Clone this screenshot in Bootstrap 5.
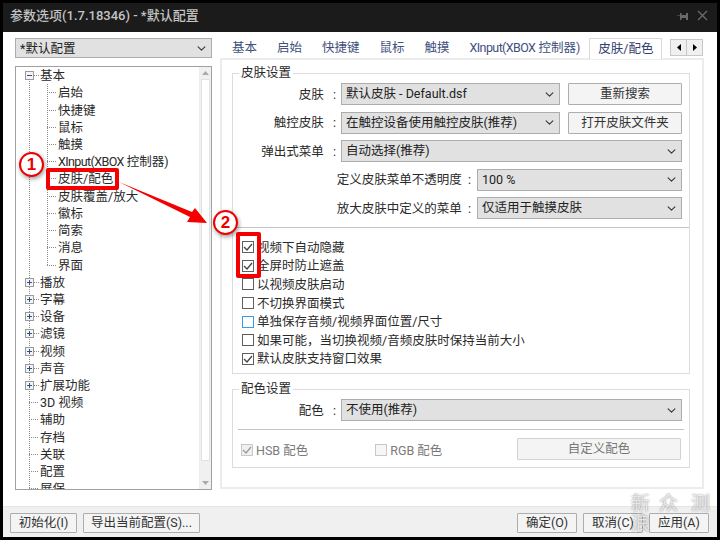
<!DOCTYPE html>
<html lang="zh-CN">
<head>
  <meta charset="UTF-8">
  <meta name="viewport" content="width=device-width, initial-scale=1.0">
  <title>参数选项</title>
  <link href="https://cdn.jsdelivr.net/npm/bootstrap@5.3.2/dist/css/bootstrap.min.css" rel="stylesheet">
  <style>
    html, body { height: 540px; overflow: hidden; }
    body { background: #000; font-family: Roboto, "Noto Sans CJK SC", sans-serif; font-size: 12.5px; color: #2a2a2a; line-height: 1.2; }
    .win { position: relative; width: 720px; height: 537px; padding: 3px 3px 0; }
    .win-title { height: 29px; background: #1b1b1b; color: #c4c4c4; font-size: 13px; font-weight: 500; padding: 0 9px 4px 7px; }
    .win-body { height: 474px; background: #fff; padding: 6px 13px 0 12px; }
    .win-foot { height: 31px; background: #f0f0f0; border-top: 1px solid #e6e6e6; padding: 6px 8px 0 7px; }

    .side-col { width: 197px; }
    .main-col { width: 484px; }
    .tight { letter-spacing: -.6px; }

    .form-select.pick { height: 22px; min-height: 0; padding: 0 20px 0 4px; font-size: 12.5px; line-height: 20px; color: #222; background-color: #e1e1e1; border: 1px solid #adadad; border-radius: 0; background-position: right 4px center; background-size: 11px 9px; box-shadow: none; }
    .form-select.pick.side-pick { height: 20px; }
    .btn.flat { height: 22px; padding: 0; font-size: 12.5px; line-height: 20px; color: #333; background: #f4f4f4; border: 1px solid #adadad; border-radius: 1px; }
    .btn.flat.faded { color: #777; border-color: #d2d2d2; }
    .btn.flat.foot-btn { height: 20px; line-height: 18px; }
    .btn.flat.custom-btn { width: 164px; height: 22px; margin-left: auto; }
    .foot-init { width: 67px; }
    .foot-export { width: 117px; margin-left: 6px; }
    .foot-act { width: 60px; margin-left: 6px; }
    .foot-act.foot-first { margin-left: auto; }

    .tree-box { height: 424px; border: 1px solid #a0a0a0; overflow: hidden; }
    .tree-pane { padding: 0 0 0 13px; overflow: hidden; }
    .tree-list { margin: 0; background: repeating-linear-gradient(#8c8c8c 0 1px, transparent 1px 2px) left 14px / 1px 100% no-repeat; }
    .tree-kids { margin-left: 18px; background: repeating-linear-gradient(#8c8c8c 0 1px, transparent 1px 2px) left top / 1px calc(100% - 8px) no-repeat; }
    .tree-row { height: 17.22px; white-space: nowrap; }
    .tree-dash { width: 10px; height: 1px; flex: none; background: repeating-linear-gradient(90deg, #8c8c8c 0 1px, transparent 1px 2px); margin-right: 1px; }
    .tree-dash.short { width: 5px; }
    .tree-toggle { width: 9px; height: 9px; margin-left: -4px; flex: none; border: 1px solid #9a9a9a; background: #f4f4f4; color: #35508a; }
    .tree-bar { width: 12px; background: #f0f0f0; flex: none; border-left: 1px solid #eee; }
    .tree-thumb { height: 382px; margin: 0 1px; background: #fff; border: 1px solid #e2e2e2; }
    .tree-arrow { height: 12px; }

    .nav.tab-strip { height: 20px; border: 0; flex-wrap: nowrap; padding-left: 2px; }
    .tab-strip .nav-link { height: 20px; padding: 0 10px; font-size: 12.5px; line-height: 19px; color: #41507c; border: 0; border-radius: 0; white-space: nowrap; }
    .tab-strip .nav-link.active { height: 21px; padding: 0 8px; margin-left: -1px; color: #33406c; background: #fff; border: 1px solid #d9d9d9; border-bottom: 0; position: relative; z-index: 1; }
    .tab-arrows { margin: 1px 1px 0 auto; }
    .tab-arrows .btn { width: 17px; height: 17px; padding: 0; background: #f0f0f0; border: 1px solid #c8c8c8; border-radius: 0; }

    .tab-panel { height: 431px; border: 2px solid #ececec; padding: 13px 12px 0 10px; }
    .group-box { border: 1px solid #dcdcdc; }
    .group-one { height: 301px; }
    .group-two { height: 79px; margin-top: 15px; }
    .group-name { display: table; background: #fff; padding: 0 2px; margin: -9px 0 0 6px; height: 16px; line-height: 16px; font-size: 12.5px; }
    .fields { padding: 2px 7px 0 0; gap: 6.5px; }
    .field-label { width: 108px; padding-right: 5px; flex: none; text-align: right; white-space: nowrap; }
    .wide-label { margin-right: 6px; }
    .field-pick { width: 219px; flex: none; }
    .field-pick-wide { width: 205px; flex: none; }
    .field-pick-full { flex: 1 1 0; width: 0; }
    .rule-line { height: 1px; background: #c4c4c4; border: 0; margin: 8px 0 0; opacity: 1; }
    .rule-line.inset { margin: 8px 5px 0; }

    .check-list { padding: 10px 0 0 9px; }
    .check-row { height: 18.6px; white-space: nowrap; }
    .form-check-input.tick { width: 12px; height: 12px; margin: 0 3px 0 0; flex: none; border: 1px solid #5f5f5f; border-radius: 0; background-color: #fff; box-shadow: none; opacity: 1; }
    .form-check-input.tick:checked { background-color: #fff; border-color: #5f5f5f; background-size: 12px 12px; background-image: url("data:image/svg+xml,%3csvg xmlns='http://www.w3.org/2000/svg' viewBox='0 0 12 12'%3e%3cpath fill='none' stroke='%23444' stroke-width='1.3' d='M2 6l3 3 5-6'/%3e%3c/svg%3e"); }
    .form-check-input.tick.focus-tick { border-color: #3c9be6; }
    .form-check-input.tick.muted-tick { border-color: #c8c8c8; background-color: #f6f6f6; margin-top: 2px; }
    .form-check-input.tick.muted-tick:checked { background-color: #f0f0f0; border-color: #c8c8c8; background-image: url("data:image/svg+xml,%3csvg xmlns='http://www.w3.org/2000/svg' viewBox='0 0 12 12'%3e%3cpath fill='none' stroke='%23999' stroke-width='1.3' d='M2 6l3 3 5-6'/%3e%3c/svg%3e"); }
    .muted-text { color: #7a7a7a; margin-top: 2px; }
    .rgb-tick { margin-left: 67px !important; }

    .mark-box { position: absolute; border: 4px solid #f40000; border-radius: 2px; }
    .mark-skin { left: 46px; top: 168px; width: 73px; height: 22px; }
    .mark-checks { left: 236px; top: 232px; width: 25px; height: 46px; }
    .mark-arrow { position: absolute; left: 0; top: 0; }
    .mark-num { position: absolute; width: 25px; height: 25px; background: #fff; border: 2px solid #ee0000; color: #ee0000; font: 700 17px/21px "Liberation Sans", sans-serif; text-align: center; box-shadow: 1px 2px 4px rgba(0,0,0,.4); }
    .num-one { left: 19px; top: 152px; }
    .num-two { left: 213px; top: 210px; }
    .stamp { position: absolute; color: rgba(255,255,255,.72); text-shadow: 0 0 2px rgba(70,70,70,.7); font-size: 19px; line-height: 20px; white-space: nowrap; }
    .stamp-a { left: 631px; top: 494px; }
    .stamp-b { left: 631px; top: 514px; }
    .stamp-c { left: 659px; top: 494px; }
    .stamp-d { left: 691px; top: 494px; }
  </style>
</head>
<body>
  <div class="win">
    <div class="win-title d-flex align-items-center justify-content-between">
      <span>参数选项(1.7.18346) - *默认配置</span>
      <span class="d-flex align-items-center gap-2">
        <svg width="12" height="12" viewBox="0 0 12 12"><path fill="#6a6a6a" d="M0 5.500h3V6H0zM3 3h1.500v2H9V3h2v7H9V8H4.500v2H3z"/></svg>
        <svg width="11" height="11" viewBox="0 0 11 11"><path stroke="#6a6a6a" stroke-width="1.3" d="M1 1l9 9M10 1l-9 9"/></svg>
      </span>
    </div>

    <div class="win-body d-flex gap-2">
      <div class="side-col d-flex flex-column">
        <select class="form-select pick side-pick mb-2"><option>*默认配置</option></select>
        <div class="tree-box d-flex" id="treeBox">
          <div class="tree-pane flex-grow-1">
            <div class="tree-list" id="treeList"></div>
          </div>
          <div class="tree-bar d-flex flex-column">
            <div class="tree-arrow d-flex align-items-center justify-content-center"><svg width="7" height="4"><path fill="#aaa" d="M3.500 0L7 4H0z"/></svg></div>
            <div class="tree-thumb"></div>
            <div class="tree-arrow mt-auto d-flex align-items-center justify-content-center"><svg width="7" height="4"><path fill="#aaa" d="M0 0h7L3.500 4z"/></svg></div>
          </div>
        </div>
      </div>

      <div class="main-col">
        <div class="d-flex">
          <ul class="nav tab-strip">
            <li class="nav-item"><a class="nav-link" href="#">基本</a></li>
            <li class="nav-item"><a class="nav-link" href="#">启始</a></li>
            <li class="nav-item"><a class="nav-link" href="#">快捷键</a></li>
            <li class="nav-item"><a class="nav-link" href="#">鼠标</a></li>
            <li class="nav-item"><a class="nav-link" href="#">触摸</a></li>
            <li class="nav-item"><a class="nav-link" href="#"><span class="tight">XInput(XBOX</span> 控制器)</a></li>
            <li class="nav-item"><a class="nav-link active" href="#">皮肤/配色</a></li>
          </ul>
          <div class="btn-group tab-arrows">
            <button class="btn d-flex align-items-center justify-content-center"><svg width="4" height="7"><path d="M4 0v7L0 3.500z"/></svg></button>
            <button class="btn d-flex align-items-center justify-content-center"><svg width="4" height="7"><path d="M0 0v7l4-3.500z"/></svg></button>
          </div>
        </div>

        <div class="tab-panel">
          <div class="group-box group-one">
            <div class="group-name">皮肤设置</div>
            <div class="fields d-flex flex-column">
              <div class="d-flex align-items-center">
                <div class="field-label">皮肤&nbsp;&nbsp;&nbsp;:</div>
                <select class="form-select pick field-pick"><option>默认皮肤 - Default.dsf</option></select>
                <button class="btn flat ms-2 flex-grow-1">重新搜索</button>
              </div>
              <div class="d-flex align-items-center">
                <div class="field-label">触控皮肤&nbsp;&nbsp;&nbsp;:</div>
                <select class="form-select pick field-pick"><option>在触控设备使用触控皮肤(推荐)</option></select>
                <button class="btn flat ms-2 flex-grow-1">打开皮肤文件夹</button>
              </div>
              <div class="d-flex align-items-center">
                <div class="field-label">弹出式菜单&nbsp;&nbsp;&nbsp;:</div>
                <select class="form-select pick field-pick-full"><option>自动选择(推荐)</option></select>
              </div>
              <div class="d-flex align-items-center justify-content-end">
                <span class="wide-label">定义皮肤菜单不透明度&nbsp;&nbsp;:</span>
                <select class="form-select pick field-pick-wide"><option>100 %</option></select>
              </div>
              <div class="d-flex align-items-center justify-content-end">
                <span class="wide-label">放大皮肤中定义的菜单&nbsp;&nbsp;:</span>
                <select class="form-select pick field-pick-wide"><option>仅适用于触摸皮肤</option></select>
              </div>
            </div>
            <hr class="rule-line">
            <div class="check-list">
              <div class="check-row d-flex align-items-center"><input class="form-check-input tick" type="checkbox" checked>视频下自动隐藏</div>
              <div class="check-row d-flex align-items-center"><input class="form-check-input tick" type="checkbox" checked>全屏时防止遮盖</div>
              <div class="check-row d-flex align-items-center"><input class="form-check-input tick" type="checkbox">以视频皮肤启动</div>
              <div class="check-row d-flex align-items-center"><input class="form-check-input tick" type="checkbox">不切换界面模式</div>
              <div class="check-row d-flex align-items-center"><input class="form-check-input tick focus-tick" type="checkbox">单独保存音频/视频界面位置/尺寸</div>
              <div class="check-row d-flex align-items-center"><input class="form-check-input tick" type="checkbox">如果可能，当切换视频/音频皮肤时保持当前大小</div>
              <div class="check-row d-flex align-items-center"><input class="form-check-input tick" type="checkbox" checked>默认皮肤支持窗口效果</div>
            </div>
          </div>

          <div class="group-box group-two">
            <div class="group-name">配色设置</div>
            <div class="fields d-flex flex-column">
              <div class="d-flex align-items-center">
                <div class="field-label">配色&nbsp;&nbsp;&nbsp;:</div>
                <select class="form-select pick field-pick-full"><option>不使用(推荐)</option></select>
              </div>
            </div>
            <hr class="rule-line inset">
            <div class="d-flex align-items-center ps-2 pt-2 pe-2">
              <input class="form-check-input tick muted-tick" type="checkbox" checked disabled>
              <span class="muted-text">HSB 配色</span>
              <input class="form-check-input tick muted-tick rgb-tick" type="checkbox" disabled>
              <span class="muted-text">RGB 配色</span>
              <button class="btn flat faded custom-btn">自定义配色</button>
            </div>
          </div>
        </div>
      </div>
    </div>

    <div class="win-foot d-flex">
      <button class="btn flat foot-btn foot-init">初始化(I)</button>
      <button class="btn flat foot-btn foot-export">导出当前配置(S)...</button>
      <button class="btn flat foot-btn foot-act foot-first">确定(O)</button>
      <button class="btn flat foot-btn foot-act">取消(C)</button>
      <button class="btn flat foot-btn foot-act">应用(A)</button>
    </div>

    <!-- 标注 -->
    <svg class="mark-arrow" width="720" height="540"><polygon fill="#f40000" points="119,182 192,212 195,208 207,223 187,222 190,217"/></svg>
    <div class="mark-box mark-skin"></div>
    <div class="mark-box mark-checks"></div>
    <div class="mark-num rounded-circle num-one">1</div>
    <div class="mark-num rounded-circle num-two">2</div>
    <div class="stamp stamp-a">新</div>
    <div class="stamp stamp-b">浪</div>
    <div class="stamp stamp-c">众</div>
    <div class="stamp stamp-d">测</div>
  </div>

  <script src="https://cdn.jsdelivr.net/npm/bootstrap@5.3.2/dist/js/bootstrap.bundle.min.js"></script>
  <script>
    const kids = ['启始', '快捷键', '鼠标', '触摸', '<span class="tight">XInput(XBOX</span>&nbsp;控制器)', '皮肤/配色', '皮肤覆盖/放大', '徽标', '简索', '消息', '界面'];
    const rest = ["播放", "字幕", "设备", "滤镜", "视频", "声音", "扩展功能"];
    const plain = ["3D 视频", "辅助", "存档", "关联", "配置", "屏保"];

    function toggle(sign) {
      const bar = sign === "+" ? '<path d="M3.500 1v5" stroke="currentColor"/>' : "";
      return `<svg class="tree-toggle" viewBox="0 0 7 7"><path d="M1 3.500h5" stroke="currentColor"/>${bar}</svg>`;
    }

    let html = `<div class="tree-row d-flex align-items-center">${toggle("-")}<span class="tree-dash short"></span>基本</div>`;
    html += `<div class="tree-kids">`;
    kids.forEach(k => {
      html += `<div class="tree-row d-flex align-items-center"><span class="tree-dash"></span><span>${k}</span></div>`;
    });
    html += `</div>`;
    rest.forEach(r => {
      html += `<div class="tree-row d-flex align-items-center">${toggle("+")}<span class="tree-dash short"></span>${r}</div>`;
    });
    plain.forEach(p => {
      html += `<div class="tree-row d-flex align-items-center"><span class="tree-dash"></span>${p}</div>`;
    });
    document.getElementById("treeList").innerHTML = html;
  </script>
</body>
</html>
